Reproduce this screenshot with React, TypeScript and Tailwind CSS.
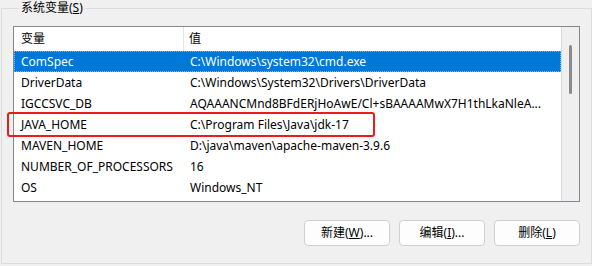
const rows = [
  { name: "ComSpec", value: "C:\\Windows\\system32\\cmd.exe" },
  { name: "DriverData", value: "C:\\Windows\\System32\\Drivers\\DriverData" },
  { name: "IGCCSVC_DB", value: "AQAAANCMnd8BFdERjHoAwE/Cl+sBAAAAMwX7H1thLkaNleA..." },
  { name: "JAVA_HOME", value: "C:\\Program Files\\Java\\jdk-17" },
  { name: "MAVEN_HOME", value: "D:\\java\\maven\\apache-maven-3.9.6" },
  { name: "NUMBER_OF_PROCESSORS", value: "16" },
  { name: "OS", value: "Windows_NT" },
];

function Btn({ label, hotkey, tail }: { label: string; hotkey: string; tail?: string }) {
  return (
    <button className="flex h-[26px] w-[86px] items-center justify-center rounded-[4px] border border-[#d0d0d0] bg-[#fdfdfd] text-[12px] text-black">
      {label}(<span className="underline">{hotkey}</span>){tail}
    </button>
  );
}

export default function App() {
  return (
    <div
      className="relative h-[266px] w-[592px] overflow-hidden bg-[#f0f0f0] text-[12px] text-black"
      style={{ fontFamily: '"Noto Sans", "Noto Sans CJK SC", sans-serif' }}
    >
      <fieldset className="ml-[1px] h-[264px] w-[590px] border border-[#dcdcdc] px-[11px]">
        <legend className="ml-[6px] px-[2px] leading-[16px]">
          系统变量(<span className="underline">S</span>)
        </legend>

        <div className="mt-[10px] flex h-[176px] w-[567px] overflow-hidden border border-[#828790] bg-white">
          <div className="flex min-w-0 flex-1 flex-col">
            <div className="flex h-[24px] shrink-0 items-center">
              <div className="w-[169px] pl-[7px]">变量</div>
              <div className="h-full w-px bg-[#e5e5e5]" />
              <div className="pl-[5px]">值</div>
            </div>
            {rows.map((row, i) => (
              <div
                key={row.name}
                className={`flex h-[21px] shrink-0 items-center border ${
                  i === 0 ? "border-dotted border-[#f0a040] bg-[#0078d7] text-white" : "border-transparent"
                }`}
              >
                <div className="w-[169px] shrink-0 pl-[6px] whitespace-nowrap">{row.name}</div>
                <div className="min-w-0 flex-1 overflow-hidden pr-[4px] pl-[6px] text-ellipsis whitespace-nowrap">
                  {row.value}
                </div>
              </div>
            ))}
          </div>
          <div className="w-[18px] shrink-0 border-l border-[#dadada] bg-[#efefef]">
            <div className="mx-auto mt-[18px] h-[49px] w-[3px] rounded-full bg-[#8a8a8a]" />
          </div>
        </div>

        <div className="mt-[18px] flex justify-end gap-[9px]">
          <Btn label="新建" hotkey="W" tail="..." />
          <Btn label="编辑" hotkey="I" tail="..." />
          <Btn label="删除" hotkey="L" />
        </div>
      </fieldset>

      <div className="absolute top-[112px] left-[7px] h-[25px] w-[368px] rounded-[3px] border-2 border-[#ec1c1c]" />
    </div>
  );
}
